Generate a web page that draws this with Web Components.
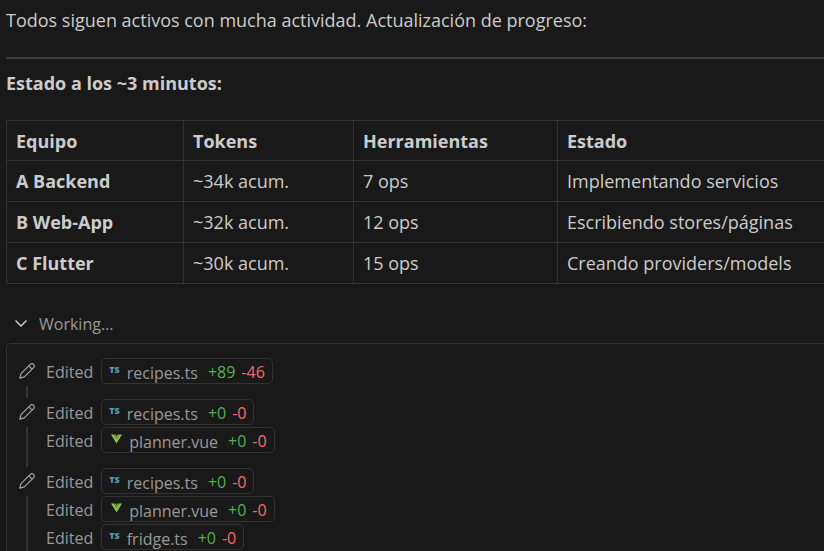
<!DOCTYPE html>
<html lang="es">
<head>
  <meta charset="UTF-8">
  <meta name="viewport" content="width=device-width, initial-scale=1.0">
  <title>Progreso</title>
  <style>
    html {
      background-color: #191919;
    }

    body {
      margin: 0;
      height: 100vh;
      overflow: hidden;
      color: #cccccc;
      font-family: "Open Sans", "Noto Sans", sans-serif;
      font-size: 18px;
      line-height: 24px;
    }
  </style>
</head>
<body>
  <chat-response>
    <p>Todos siguen activos con mucha actividad. Actualización de progreso:</p>
    <team-status slot="status"></team-status>
    <work-log slot="log">
      <edit-group>
        <file-edit file="recipes.ts" added="89" removed="46"></file-edit>
      </edit-group>
      <edit-group>
        <file-edit file="recipes.ts" added="0" removed="0"></file-edit>
        <file-edit file="planner.vue" added="0" removed="0"></file-edit>
      </edit-group>
      <edit-group>
        <file-edit file="recipes.ts" added="0" removed="0"></file-edit>
        <file-edit file="planner.vue" added="0" removed="0"></file-edit>
        <file-edit file="fridge.ts" added="0" removed="0"></file-edit>
      </edit-group>
    </work-log>
  </chat-response>

  <script>
    class ChatResponse extends HTMLElement {
      constructor() {
        super();
        this.attachShadow({ mode: 'open' });
        this.shadowRoot.innerHTML = /*html*/`
          <style>
            :host {
              display: block;
              padding: 8px 0 0 6px;
            }

            ::slotted(p) {
              margin: 0;
            }

            hr {
              margin: 25px 0 12px;
              border: 0;
              border-top: 2px solid #3c3c3c;
            }
          </style>
          <slot></slot>
          <hr>
          <slot name="status"></slot>
          <slot name="log"></slot>
        `;
      }
    }

    class TeamStatus extends HTMLElement {
      constructor() {
        super();
        this.attachShadow({ mode: 'open' });
        this.equipos = [
          { nombre: 'A Backend', tokens: '~34k acum.', ops: '7 ops', estado: 'Implementando servicios' },
          { nombre: 'B Web-App', tokens: '~32k acum.', ops: '12 ops', estado: 'Escribiendo stores/páginas' },
          { nombre: 'C Flutter', tokens: '~30k acum.', ops: '15 ops', estado: 'Creando providers/models' }
        ];
        this.shadowRoot.innerHTML = /*html*/`
          <style>
            :host {
              display: block;
            }

            h2 {
              margin: 0 0 25px;
              font-size: 18px;
              font-weight: 700;
            }

            table {
              width: 100%;
              border-collapse: separate;
              border-spacing: 0;
              border-top: 1px solid #333333;
              border-left: 1px solid #333333;
            }

            th, td {
              box-sizing: border-box;
              height: 41px;
              padding: 0 9px;
              border-right: 1px solid #333333;
              border-bottom: 1px solid #333333;
              text-align: left;
            }

            thead th {
              height: 40px;
            }

            /* la tabla sigue hasta el borde de la ventana */
            th:last-child, td:last-child {
              border-right: 0;
            }

            .equipo { width: 177px; }
            .tokens { width: 170px; }
            .ops { width: 204px; }
          </style>
          <h2>Estado a los ~3 minutos:</h2>
          <table>
            <thead>
              <tr>
                <th class="equipo" scope="col">Equipo</th>
                <th class="tokens" scope="col">Tokens</th>
                <th class="ops" scope="col">Herramientas</th>
                <th scope="col">Estado</th>
              </tr>
            </thead>
            <tbody>
              ${this.equipos.map(e => `
                <tr>
                  <th scope="row">${e.nombre}</th>
                  <td>${e.tokens}</td>
                  <td>${e.ops}</td>
                  <td>${e.estado}</td>
                </tr>
              `).join('')}
            </tbody>
          </table>
        `;
      }
    }

    class WorkLog extends HTMLElement {
      constructor() {
        super();
        this.attachShadow({ mode: 'open' });
        this.shadowRoot.innerHTML = /*html*/`
          <style>
            :host {
              display: block;
              margin-top: 28px;
              color: #999999;
              font-size: 16px;
            }

            button {
              display: flex;
              align-items: center;
              gap: 10px;
              padding: 0 7px;
              border: 0;
              background: none;
              color: inherit;
              font: inherit;
              cursor: pointer;
            }

            svg {
              width: 16px;
              height: 16px;
            }

            .panel {
              margin-top: 7px;
              padding: 14px 0 0 12px;
              border: 1px solid #333333;
              border-right: 0;
              border-radius: 5px 0 0 5px;
            }

            .panel[hidden] {
              display: none;
            }
          </style>
          <button type="button" aria-expanded="true">
            <svg viewBox="0 0 16 16" fill="none" stroke="#cccccc" stroke-width="1.5"><path d="M2.500 4.500 8 10l5.500-5.500"/></svg>
            Working...
          </button>
          <div class="panel"><slot></slot></div>
        `;
      }

      connectedCallback() {
        const button = this.shadowRoot.querySelector('button');
        const panel = this.shadowRoot.querySelector('.panel');
        button.addEventListener('click', () => {
          panel.hidden = !panel.hidden;
          button.setAttribute('aria-expanded', String(!panel.hidden));
        });
      }
    }

    class EditGroup extends HTMLElement {
      constructor() {
        super();
        this.attachShadow({ mode: 'open' });
        this.shadowRoot.innerHTML = /*html*/`
          <style>
            :host {
              display: flex;
              gap: 11px;
            }

            .rail {
              display: flex;
              flex-direction: column;
              align-items: center;
              width: 16px;
            }

            svg {
              width: 16px;
              height: 28px;
            }

            .line {
              flex: 1;
              width: 2px;
              margin-bottom: 1px;
              background-color: #333333;
            }

            .edits {
              flex: 1;
              padding-bottom: 13px;
            }
          </style>
          <div class="rail">
            <svg viewBox="0 -5 16 28" fill="none" stroke="#a5a5a5" stroke-width="1.200" stroke-linejoin="round"><path d="M.8 15.200 2 10.600 11.300 1.300a2.200 2.200 0 0 1 3.300 3.300L5.300 13.900ZM9.800 2.800l3.300 3.300"/></svg>
            <div class="line"></div>
          </div>
          <div class="edits"><slot></slot></div>
        `;
      }
    }

    class FileEdit extends HTMLElement {
      constructor() {
        super();
        this.attachShadow({ mode: 'open' });
      }

      connectedCallback() {
        const file = this.getAttribute('file');
        const icon = file.endsWith('.vue')
          ? '<svg class="vue" viewBox="0 0 12 10"><path fill="#8dc149" d="M0 0h3l3 5 3-5h3L6 10Z"/><path fill="#76a33c" d="M3 0h2l1 2 1-2h2L6 5Z"/></svg>'
          : '<span class="ts">TS</span>';
        this.shadowRoot.innerHTML = /*html*/`
          <style>
            :host {
              display: flex;
              align-items: center;
              gap: 8px;
              height: 28px;
            }

            a {
              display: flex;
              align-items: center;
              box-sizing: border-box;
              height: 26px;
              margin-bottom: 2px;
              padding: 0 7px;
              border: 1px solid #333333;
              border-radius: 5px;
              color: inherit;
              text-decoration: none;
            }

            .ts {
              margin-right: 7px;
              padding-bottom: 2px;
              color: #519aba;
              font-size: 9px;
              font-weight: 800;
              line-height: 12px;
            }

            .vue {
              width: 11px;
              height: 10px;
              margin: 0 7px 2px 2px;
            }

            .name {
              padding-top: 4px;
            }

            .added {
              margin-left: 10px;
              padding-top: 2px;
              color: #54b054;
            }

            .removed {
              margin-left: 6px;
              padding-top: 2px;
              color: #fc6a6a;
            }
          </style>
          <span>Edited</span>
          <a href="#">${icon}<span class="name">${file}</span><span class="added">+${this.getAttribute('added')}</span><span class="removed">-${this.getAttribute('removed')}</span></a>
        `;
      }
    }

    customElements.define('chat-response', ChatResponse);
    customElements.define('team-status', TeamStatus);
    customElements.define('work-log', WorkLog);
    customElements.define('edit-group', EditGroup);
    customElements.define('file-edit', FileEdit);
  </script>
</body>
</html>
